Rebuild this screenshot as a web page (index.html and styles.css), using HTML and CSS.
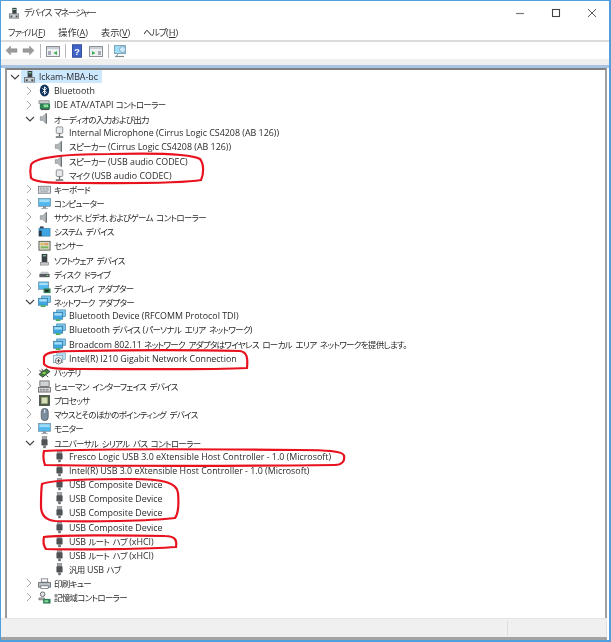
FILE: index.html
```html
<!DOCTYPE html>
<html lang="ja">
<head>
<meta charset="utf-8">
<title>デバイス マネージャー</title>
<link rel="stylesheet" href="styles.css">
</head>
<body>
<svg class="defs" width="0" height="0" aria-hidden="true">
  <defs>
    <symbol id="i-pc" viewBox="0 0 14 14"><rect x="5" y="1" width="5" height="7" fill="#3c4246"/><rect x="6" y="2.5" width="3" height="1" fill="#9fb"/><rect x="1.5" y="8" width="11" height="5" fill="#c9cfd4" stroke="#5f676d" stroke-width=".8"/><rect x="3" y="10" width="2" height="2" fill="#444"/><rect x="9" y="10" width="2" height="2" fill="#444"/></symbol>
    <symbol id="i-bt" viewBox="0 0 14 14"><ellipse cx="7" cy="7" rx="5" ry="6.5" fill="#10345e"/><path d="M4.6 4.6 9.2 9 7 11V3l2.2 2L4.6 9.4" fill="none" stroke="#fff" stroke-width="1"/></symbol>
    <symbol id="i-ide" viewBox="0 0 14 14"><rect x="1" y="3" width="11" height="3" fill="#c9cdd0" stroke="#666" stroke-width=".6"/><rect x="2" y="6" width="11" height="6" fill="#2f7f55"/><rect x="6" y="7" width="5" height="3" fill="#8be09a"/><rect x="3" y="12" width="9" height="1" fill="#333"/></symbol>
    <symbol id="i-spk" viewBox="0 0 14 14"><path d="M2.5 5H5l4-3.500v11L5 9H2.500z" fill="#b3b8bb" stroke="#7c8286" stroke-width=".7"/><path d="M9 1.500v11" stroke="#5c6266"/></symbol>
    <symbol id="i-mic" viewBox="0 0 14 14"><rect x="3.500" y="1" width="7" height="7" rx="1" fill="#e7eaec" stroke="#6c7276" stroke-width=".8"/><rect x="6.300" y="8" width="1.400" height="3" fill="#666"/><rect x="3" y="11" width="8" height="1.800" fill="#70767a"/></symbol>
    <symbol id="i-kb" viewBox="0 0 14 14"><rect x=".5" y="3.500" width="13" height="7.500" fill="#dfe3e6" stroke="#666c70" stroke-width=".8"/><path d="M2 5.500h10M2 7.500h10M3 9.500h8" stroke="#6a7074" stroke-dasharray="1 .6"/></symbol>
    <symbol id="i-mon" viewBox="0 0 14 14"><rect x=".5" y="1.500" width="13" height="8.500" fill="#53b8ee" stroke="#6f8795" stroke-width=".7"/><rect x="1.500" y="2.500" width="11" height="3" fill="#9fdcf8"/><rect x="5.500" y="10" width="3" height="2" fill="#889"/><rect x="3.500" y="12" width="7" height="1" fill="#99a1a6"/></symbol>
    <symbol id="i-sys" viewBox="0 0 14 14"><rect x="2" y="1.500" width="4" height="4" fill="#39424a"/><rect x="1" y="3.500" width="12" height="8.500" fill="#3fa6e3" stroke="#3a6f92" stroke-width=".6"/><rect x="1" y="6" width="3" height="6" fill="#2b3a46"/></symbol>
    <symbol id="i-sen" viewBox="0 0 14 14"><rect x="1" y="2.500" width="12" height="9.500" fill="#d6d9c0" stroke="#4a4f45" stroke-width=".9"/><rect x="3" y="4.500" width="3" height="2" fill="#e8b84a"/><rect x="7" y="4.500" width="4" height="2" fill="#d95"/><rect x="3" y="8" width="8" height="2" fill="#7ab55c"/></symbol>
    <symbol id="i-sw" viewBox="0 0 14 14"><rect x="4" y="1" width="6" height="9" fill="#3a4045"/><rect x="5.500" y="2.500" width="3" height="1" fill="#9fb"/><rect x="2.500" y="10" width="9" height="3" fill="#c8ccd0" stroke="#666" stroke-width=".5"/></symbol>
    <symbol id="i-disk" viewBox="0 0 14 14"><path d="M1.500 7.500 3.500 5h7l2 2.500z" fill="#c2c6c9"/><rect x="1.500" y="7.500" width="11" height="3.500" fill="#565c60"/><rect x="9.500" y="8.700" width="1.500" height="1" fill="#8f8"/></symbol>
    <symbol id="i-dsp" viewBox="0 0 14 14"><rect x=".5" y="1" width="11" height="8" fill="#53b8ee" stroke="#6f8795" stroke-width=".7"/><rect x="1.500" y="2" width="9" height="2.500" fill="#a5def8"/><rect x="6" y="8" width="7.500" height="5" fill="#2f7f55"/><rect x="7.500" y="9.500" width="4" height="2" fill="#222"/></symbol>
    <symbol id="i-net" viewBox="0 0 14 14"><rect x="4" y="1" width="9.500" height="7" fill="#7cc7ef" stroke="#45819f" stroke-width=".7"/><rect x=".5" y="3.500" width="10" height="7.500" fill="#3fa6e3" stroke="#39749a" stroke-width=".7"/><rect x="1.500" y="4.500" width="8" height="2.500" fill="#a7e0f8"/><rect x="3" y="11" width="5" height="2" fill="#47b05a"/></symbol>
    <symbol id="i-wired" viewBox="0 0 14 14"><rect x="4" y="1" width="9.500" height="7" fill="#b9dff2" stroke="#7fa7bb" stroke-width=".7"/><rect x=".5" y="3.500" width="10" height="8" fill="#dff2fb" stroke="#6d97ad" stroke-width=".7"/><circle cx="6" cy="9.500" r="3.400" fill="#fff" stroke="#555" stroke-width=".8"/><path d="M6 7.500v4M4 9.500h4" stroke="#333" stroke-width=".9"/></symbol>
    <symbol id="i-bat" viewBox="0 0 14 14"><path d="M1 9 9 3l4 3-8 6z" fill="#3f7f3a" stroke="#223" stroke-width=".7"/><path d="M4 3l2 3M1.500 5l3 1M9 10l2 2" stroke="#333"/><rect x="5" y="6.500" width="3" height="2" fill="#9d5"/></symbol>
    <symbol id="i-hid" viewBox="0 0 14 14"><rect x="2" y="1" width="10" height="6" fill="#cfd3d6" stroke="#555" stroke-width=".8"/><rect x=".5" y="8" width="13" height="5" fill="#dfe3e6" stroke="#555" stroke-width=".8"/><path d="M2 10h10M2 11.800h10" stroke="#555" stroke-dasharray="1 .6"/></symbol>
    <symbol id="i-cpu" viewBox="0 0 14 14"><rect x="1.500" y="1.500" width="11" height="11" fill="#4d5f47" stroke="#3a463a" stroke-width=".8"/><rect x="3.500" y="3.500" width="7" height="7" fill="#d7ddb5" stroke="#8c9a6e" stroke-width=".6"/></symbol>
    <symbol id="i-mouse" viewBox="0 0 14 14"><rect x="3.500" y=".5" width="7.500" height="13" rx="3.500" fill="#7d8f9f" stroke="#48525c" stroke-width=".8"/><path d="M7.200 1.500v4" stroke="#dfe6ec" stroke-width="1.200"/></symbol>
    <symbol id="i-usb" viewBox="0 0 14 14"><rect x="4.500" y=".5" width="5" height="3" fill="#a2a6a9" stroke="#777" stroke-width=".5"/><rect x="3.700" y="3.500" width="6.600" height="6.800" rx=".8" fill="#4e5254"/><rect x="5.600" y="10.300" width="2.800" height="2.800" fill="#6a6e71"/></symbol>
    <symbol id="i-prn" viewBox="0 0 14 14"><rect x="3.500" y="2" width="7" height="3.500" fill="#fff" stroke="#556" stroke-width=".7"/><path d="M.5 6h13v5H.5z" fill="#b9c0c5" stroke="#4c5358" stroke-width=".8"/><rect x="3" y="9.500" width="8" height="3" fill="#fff" stroke="#556" stroke-width=".7"/></symbol>
    <symbol id="i-sto" viewBox="0 0 14 14"><circle cx="5" cy="3.500" r="2.500" fill="#dfe3e6" stroke="#444" stroke-width=".8"/><path d="M1 7.500h6v2H1z" fill="#bbb" stroke="#444" stroke-width=".6"/><rect x="5.500" y="8.500" width="8" height="5" fill="#2f7f55"/><rect x="7" y="10" width="4" height="2" fill="#8be09a"/></symbol>
    <symbol id="i-chev-r" viewBox="0 0 10 8"><path d="M2 0l4 4-4 4" fill="none" stroke="#a6a6a6" stroke-width="1"/></symbol>
    <symbol id="i-chev-d" viewBox="0 0 10 8"><path d="M1 2l4 4 4-4" fill="none" stroke="#404040" stroke-width="1.100"/></symbol>
  </defs>
</svg>

<div class="window">
  <header class="titlebar">
    <svg class="title-icon"><use href="#i-pc"/></svg>
    <span class="title-text">デバイス マネージャー</span>
    <div class="controls">
      <svg class="ctl" viewBox="0 0 10 10"><path d="M1 5.500h8" stroke="#777" stroke-width="1.200"/></svg>
      <svg class="ctl" viewBox="0 0 10 10"><rect x="1.500" y="1.500" width="7" height="7" fill="none" stroke="#444" stroke-width="1.100"/></svg>
      <svg class="ctl" viewBox="0 0 10 10"><path d="M1 1l8 8M9 1l-8 8" stroke="#444" stroke-width=".9"/></svg>
    </div>
  </header>

  <nav class="menubar">
    <span class="menu"><span class="ja">ファイル</span>(<u>F</u>)</span>
    <span class="menu">操作(<u>A</u>)</span>
    <span class="menu">表示(<u>V</u>)</span>
    <span class="menu"><span class="ja">ヘルプ</span>(<u>H</u>)</span>
  </nav>

  <div class="toolbar">
    <svg class="tool tool-arrow" viewBox="0 0 14 12"><path d="M1 6l5-5v3h7v4H6v3z" fill="#9a9a9a" stroke="#8a8a8a" stroke-width=".5"/></svg>
    <svg class="tool tool-arrow" viewBox="0 0 14 12"><path d="M13 6L8 1v3H1v4h7v3z" fill="#9a9a9a" stroke="#8a8a8a" stroke-width=".5"/></svg>
    <span class="tool-sep"></span>
    <svg class="tool" viewBox="0 0 14 14"><rect x=".5" y="2.500" width="13" height="10" fill="#eef1f2" stroke="#8b9196"/><rect x="1" y="3" width="12" height="2" fill="#c9ced2"/><rect x="2" y="7" width="3" height="4" fill="#aab"/><path d="M11 7v4L7.500 9z" fill="#3fae55"/></svg>
    <span class="tool-sep"></span>
    <svg class="tool tool-help" viewBox="0 0 12 16"><rect x=".5" y=".5" width="11" height="15" fill="#3f63c8" stroke="#27408e"/><text x="6" y="12.500" class="help-q">?</text></svg>
    <svg class="tool" viewBox="0 0 14 14"><rect x=".5" y="2.500" width="13" height="10" fill="#eef1f2" stroke="#8b9196"/><rect x="1" y="3" width="12" height="2" fill="#c9ced2"/><path d="M3 7v4l3.500-2z" fill="#3fae55"/><rect x="9" y="7" width="3" height="4" fill="#aab"/></svg>
    <span class="tool-sep"></span>
    <svg class="tool" viewBox="0 0 14 14"><rect x=".5" y="1.500" width="11" height="8" fill="#9fdcf8" stroke="#7fa7bb"/><circle cx="8.500" cy="5.500" r="3" fill="#cbeafa" stroke="#6d97ad" stroke-width=".7"/><path d="M1 12.500h9" stroke="#7d8a92" stroke-width="1.200"/><path d="M4 10l-1.500 2" stroke="#7d8a92"/></svg>
  </div>

  <div class="band"></div>

  <main class="pane">
    <ul class="tree">
      <li class="row lv0"><svg class="chev"><use href="#i-chev-d"/></svg><span class="selected"><svg class="icon"><use href="#i-pc"/></svg><span class="label">lckam-MBA-bc</span></span></li>
      <li class="row lv1"><svg class="chev"><use href="#i-chev-r"/></svg><svg class="icon"><use href="#i-bt"/></svg><span class="label">Bluetooth</span></li>
      <li class="row lv1"><svg class="chev"><use href="#i-chev-r"/></svg><svg class="icon"><use href="#i-ide"/></svg><span class="label">IDE ATA/ATAPI <span class="ja">コントローラー</span></span></li>
      <li class="row lv1"><svg class="chev"><use href="#i-chev-d"/></svg><svg class="icon"><use href="#i-spk"/></svg><span class="label ja">オーディオの入力および出力</span></li>
      <li class="row lv2"><svg class="icon"><use href="#i-mic"/></svg><span class="label">Internal Microphone (Cirrus Logic CS4208 (AB 126))</span></li>
      <li class="row lv2"><svg class="icon"><use href="#i-spk"/></svg><span class="label"><span class="ja">スピーカー</span> (Cirrus Logic CS4208 (AB 126))</span></li>
      <li class="row lv2"><svg class="icon"><use href="#i-spk"/></svg><span class="label"><span class="ja">スピーカー</span> (USB audio CODEC)</span></li>
      <li class="row lv2"><svg class="icon"><use href="#i-mic"/></svg><span class="label"><span class="ja">マイク</span> (USB audio CODEC)</span></li>
      <li class="row lv1"><svg class="chev"><use href="#i-chev-r"/></svg><svg class="icon"><use href="#i-kb"/></svg><span class="label ja">キーボード</span></li>
      <li class="row lv1"><svg class="chev"><use href="#i-chev-r"/></svg><svg class="icon"><use href="#i-mon"/></svg><span class="label ja">コンピューター</span></li>
      <li class="row lv1"><svg class="chev"><use href="#i-chev-r"/></svg><svg class="icon"><use href="#i-spk"/></svg><span class="label ja">サウンド、ビデオ、およびゲーム コントローラー</span></li>
      <li class="row lv1"><svg class="chev"><use href="#i-chev-r"/></svg><svg class="icon"><use href="#i-sys"/></svg><span class="label ja">システム デバイス</span></li>
      <li class="row lv1"><svg class="chev"><use href="#i-chev-r"/></svg><svg class="icon"><use href="#i-sen"/></svg><span class="label ja">センサー</span></li>
      <li class="row lv1"><svg class="chev"><use href="#i-chev-r"/></svg><svg class="icon"><use href="#i-sw"/></svg><span class="label ja">ソフトウェア デバイス</span></li>
      <li class="row lv1"><svg class="chev"><use href="#i-chev-r"/></svg><svg class="icon"><use href="#i-disk"/></svg><span class="label ja">ディスク ドライブ</span></li>
      <li class="row lv1"><svg class="chev"><use href="#i-chev-r"/></svg><svg class="icon"><use href="#i-dsp"/></svg><span class="label ja">ディスプレイ アダプター</span></li>
      <li class="row lv1"><svg class="chev"><use href="#i-chev-d"/></svg><svg class="icon"><use href="#i-net"/></svg><span class="label ja">ネットワーク アダプター</span></li>
      <li class="row lv2"><svg class="icon"><use href="#i-net"/></svg><span class="label">Bluetooth Device (RFCOMM Protocol TDI)</span></li>
      <li class="row lv2"><svg class="icon"><use href="#i-net"/></svg><span class="label">Bluetooth <span class="ja">デバイス</span> (<span class="ja">パーソナル エリア ネットワーク</span>)</span></li>
      <li class="row lv2"><svg class="icon"><use href="#i-net"/></svg><span class="label">Broadcom 802.11 <span class="ja">ネットワーク アダプタはワイヤレス ローカル エリア ネットワークを提供します。</span></span></li>
      <li class="row lv2"><svg class="icon"><use href="#i-wired"/></svg><span class="label">Intel(R) I210 Gigabit Network Connection</span></li>
      <li class="row lv1"><svg class="chev"><use href="#i-chev-r"/></svg><svg class="icon"><use href="#i-bat"/></svg><span class="label ja">バッテリ</span></li>
      <li class="row lv1"><svg class="chev"><use href="#i-chev-r"/></svg><svg class="icon"><use href="#i-hid"/></svg><span class="label ja">ヒューマン インターフェイス デバイス</span></li>
      <li class="row lv1"><svg class="chev"><use href="#i-chev-r"/></svg><svg class="icon"><use href="#i-cpu"/></svg><span class="label ja">プロセッサ</span></li>
      <li class="row lv1"><svg class="chev"><use href="#i-chev-r"/></svg><svg class="icon"><use href="#i-mouse"/></svg><span class="label ja">マウスとそのほかのポインティング デバイス</span></li>
      <li class="row lv1"><svg class="chev"><use href="#i-chev-r"/></svg><svg class="icon"><use href="#i-mon"/></svg><span class="label ja">モニター</span></li>
      <li class="row lv1"><svg class="chev"><use href="#i-chev-d"/></svg><svg class="icon"><use href="#i-usb"/></svg><span class="label ja">ユニバーサル シリアル バス コントローラー</span></li>
      <li class="row lv2"><svg class="icon"><use href="#i-usb"/></svg><span class="label">Fresco Logic USB 3.0 eXtensible Host Controller - 1.0 (Microsoft)</span></li>
      <li class="row lv2"><svg class="icon"><use href="#i-usb"/></svg><span class="label">Intel(R) USB 3.0 eXtensible Host Controller - 1.0 (Microsoft)</span></li>
      <li class="row lv2"><svg class="icon"><use href="#i-usb"/></svg><span class="label">USB Composite Device</span></li>
      <li class="row lv2"><svg class="icon"><use href="#i-usb"/></svg><span class="label">USB Composite Device</span></li>
      <li class="row lv2"><svg class="icon"><use href="#i-usb"/></svg><span class="label">USB Composite Device</span></li>
      <li class="row lv2"><svg class="icon"><use href="#i-usb"/></svg><span class="label">USB Composite Device</span></li>
      <li class="row lv2"><svg class="icon"><use href="#i-usb"/></svg><span class="label">USB <span class="ja">ルート ハブ</span> (xHCI)</span></li>
      <li class="row lv2"><svg class="icon"><use href="#i-usb"/></svg><span class="label">USB <span class="ja">ルート ハブ</span> (xHCI)</span></li>
      <li class="row lv2"><svg class="icon"><use href="#i-usb"/></svg><span class="label"><span class="ja">汎用</span> USB <span class="ja">ハブ</span></span></li>
      <li class="row lv1"><svg class="chev"><use href="#i-chev-r"/></svg><svg class="icon"><use href="#i-prn"/></svg><span class="label ja">印刷キュー</span></li>
      <li class="row lv1"><svg class="chev"><use href="#i-chev-r"/></svg><svg class="icon"><use href="#i-sto"/></svg><span class="label ja">記憶域コントローラー</span></li>
    </ul>
  </main>

  <footer class="statusbar">
    <span class="status-cell"></span>
    <span class="status-cell status-small"></span>
  </footer>
</div>

<svg class="marks" viewBox="0 0 611 642" aria-hidden="true">
  <path d="M31 165C33 158 60 154 110 154C150 153 190 153 200 159C204 164 204 174 201 180C180 184 120 183 80 183C55 183 36 183 31 178C30 173 30 169 31 165Z"/>
  <path d="M44 357C46 352 55 351 80 351C130 350 200 350 240 351C247 352 248 358 247 368C210 370 130 369 80 369C60 369 47 369 44 364Z"/>
  <path d="M44 451C90 449 200 449 300 450C325 450 344 451 344 456C345 461 342 465 335 465C250 466 120 466 45 465C43 460 43 456 44 451Z"/>
  <path d="M42 484C50 480 90 479 130 479C165 479 177 483 178 493C179 505 178 514 175 518C150 521 90 522 55 521C45 520 41 515 41 506C41 497 41 490 42 484Z"/>
  <path d="M44 537C60 535 120 535 165 536C176 536 177 541 176 547C150 549 80 550 46 549C43 545 43 541 44 537Z"/>
</svg>
</body>
</html>
```

FILE: styles.css
```css
* { box-sizing: border-box; }

html, body {
  margin: 0;
  padding: 0;
  width: 611px;
  height: 642px;
  overflow: hidden;
  background: #fff;
}

body {
  position: relative;
  font-family: "Open Sans", "Noto Sans CJK JP", sans-serif;
  font-feature-settings: "palt";
  color: #1c1c1c;
}

.defs { position: absolute; }

.window {
  width: 611px;
  height: 642px;
  display: flex;
  flex-direction: column;
  background: #fff;
  border: 1px solid #4f9fdc;
  border-right-width: 2px;
  border-bottom-width: 2px;
  filter: blur(.3px);
}

.titlebar {
  height: 23px;
  display: flex;
  align-items: center;
  padding-left: 7px;
  flex: none;
}

.title-icon { width: 12px; height: 12px; margin-right: 4px; }

.title-text {
  font-size: 9px;
  letter-spacing: -1.4px;
  word-spacing: 2px;
  color: #333;
}

.controls {
  margin-left: auto;
  display: flex;
  align-items: center;
  gap: 26px;
  padding-right: 12px;
}

.ctl { width: 10px; height: 10px; }

.menubar {
  height: 18px;
  flex: none;
  display: flex;
  align-items: center;
  gap: 13px;
  padding-left: 7px;
  font-size: 9.2px;
  color: #333;
  border-bottom: 2px solid #dcdcdc;
}

.toolbar {
  height: 17px;
  flex: none;
  display: flex;
  align-items: center;
  padding-left: 4px;
  gap: 4px;
}

.tool { width: 14px; height: 14px; }
.tool-arrow { width: 13px; height: 11px; }
.tool-help { width: 10px; height: 14px; margin: 0 3px 0 1px; }
.tool-sep { width: 1px; height: 14px; background: #b8b8b8; margin: 0 1px; }
.help-q { font: 700 11px "Liberation Sans", sans-serif; fill: #fff; text-anchor: middle; }

.band {
  height: 9px;
  flex: none;
  background: #efefef;
  border-bottom: 3px solid #a9c4e2;
}

.pane {
  flex: 1;
  min-height: 0;
  margin: 0 2px 0 4px;
  border-top: 2px solid #808080;
  border-left: 2px solid #9a9a9a;
  border-right: 2px solid #a0a0a0;
  background: #fff;
  overflow: hidden;
}

.tree {
  list-style: none;
  margin: 0;
  padding: 0;
}

.row {
  height: 14.08px;
  padding-bottom: 1px;
  display: flex;
  align-items: center;
  font-size: 8.9px;
  white-space: nowrap;
}

.lv0 { padding-left: 3px; }
.lv1 { padding-left: 18px; }
.lv2 { padding-left: 46px; }

.chev { width: 10px; height: 8px; margin-right: 3px; flex: none; }
.lv0 .chev { margin-right: 1px; }
.icon { width: 13px; height: 13px; flex: none; margin-right: 3px; }

.label { color: #2a2a2a; }

.ja {
  font-size: 8.5px;
  letter-spacing: -.7px;
  word-spacing: 2px;
}

.menu .ja {
  font-size: 9px;
  letter-spacing: -1px;
}

.selected {
  display: flex;
  align-items: center;
  background: #cce8ff;
  height: 13px;
  padding: 0 4px 0 2px;
}

.statusbar {
  height: 22px;
  flex: none;
  margin: 0 2px 0 0;
  display: flex;
  background: #f0f0f0;
  border-top: 1px solid #e4e4e4;
  border-bottom: 3px solid #a3a3a3;
  padding: 2px 0 1px;
}

.status-cell {
  width: 507px;
  border-right: 1px solid #dedede;
}

.status-small { flex: 1; border-right: 1px solid #dedede; }

.marks {
  position: absolute;
  inset: 0;
  width: 611px;
  height: 642px;
  pointer-events: none;
  filter: blur(.3px);
}

.marks path {
  fill: none;
  stroke: #e8121f;
  stroke-width: 2.2;
}
```
